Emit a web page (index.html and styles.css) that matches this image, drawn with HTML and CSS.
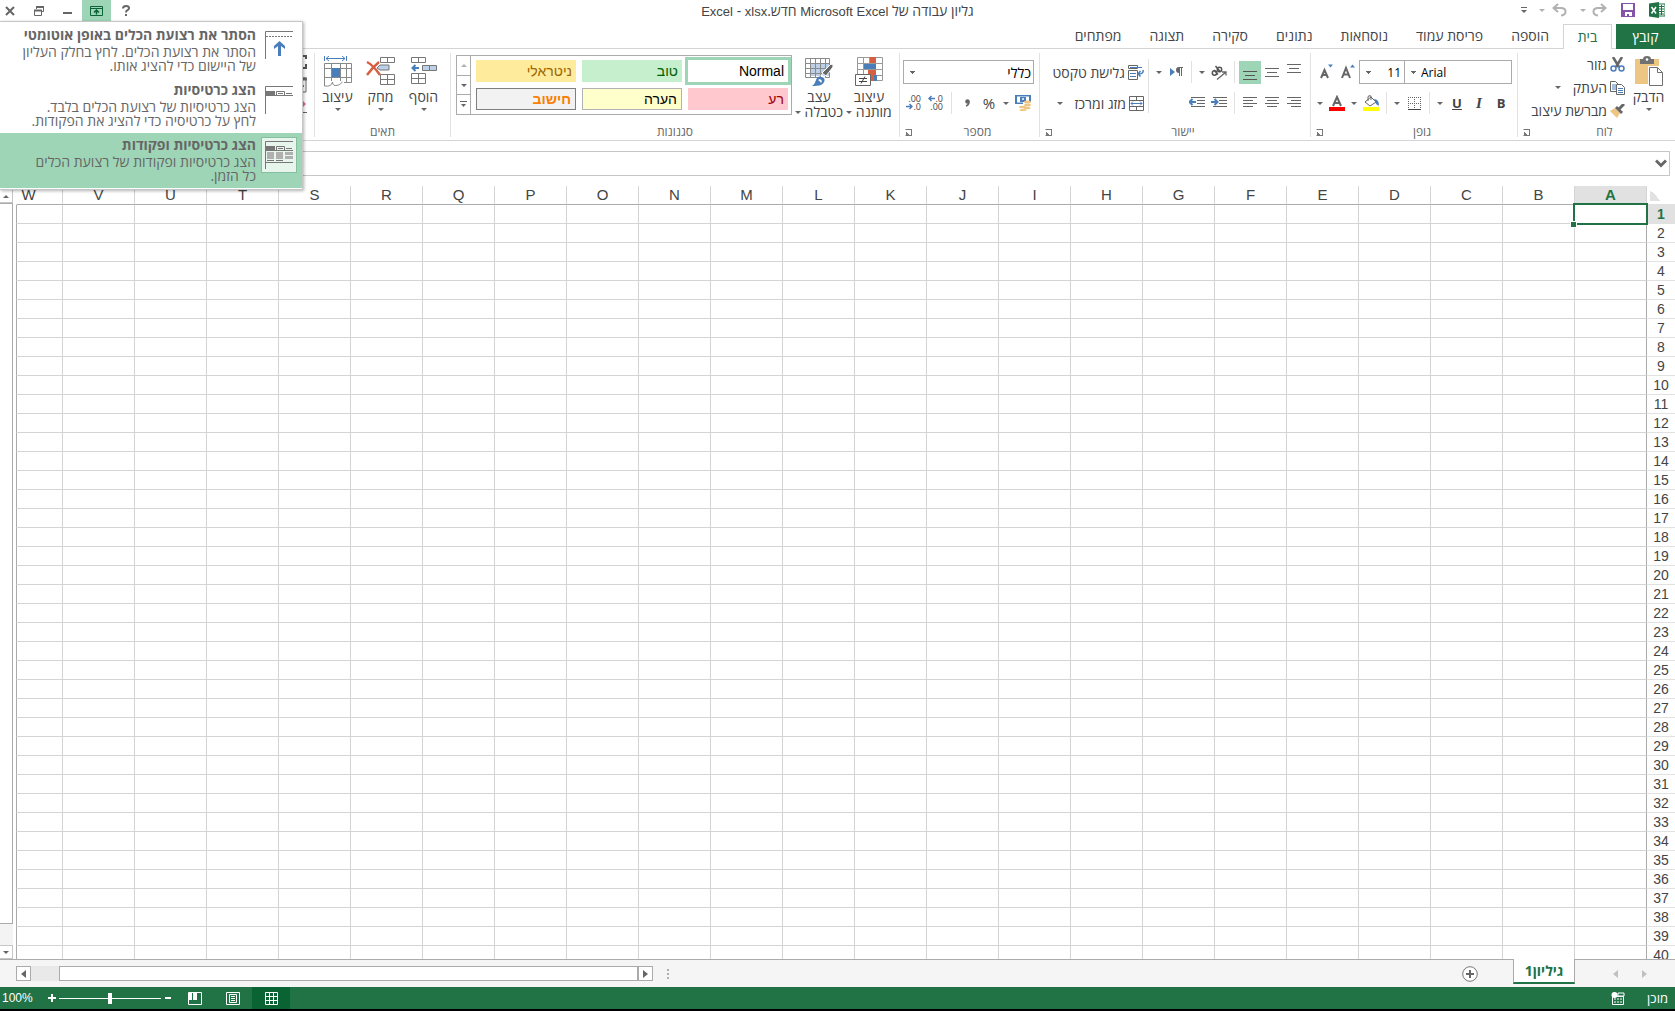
FILE: index.html
```
<!DOCTYPE html>
<html lang="he" dir="rtl">
<head>
    <meta charset="UTF-8">
    <meta name="viewport" content="width=device-width, initial-scale=1.0">
    <title>גליון עבודה של Microsoft Excel חדש.xlsx - Excel</title>
    <link rel="stylesheet" href="styles.css">
</head>
<body>
    <header class="titlebar">
        <div class="quick-access">
            <svg width="16" height="16" viewBox="0 0 16 16"><path d="M9 2h7v12H9z" fill="#fff" stroke="#217346"/><path d="M10 4.500h5M10 7h5M10 9.500h5M10 12h5M12.500 3v10" stroke="#217346"/><path d="M0 1.500L10 0v16L0 14.500z" fill="#217346"/><path d="M2.500 5l4.500 6.500M7 5l-4.500 6.500" stroke="#fff" stroke-width="1.500"/></svg>
            <button class="qa-save" aria-label="שמור"><svg width="14" height="14" viewBox="0 0 14 14"><path d="M0 0h14v14H0z" fill="#8553a8"/><path d="M2 1h10v6H2zM4 9h7v4H8v-2H6v2H4z" fill="#fff"/></svg></button>
            <button class="qa-redo" aria-label="בצע שוב"><svg width="15" height="14" viewBox="0 0 15 14"><path d="M13 5H6Q1.500 5 1.500 8.500T6 12.500M9 1l4.500 4L9 9" fill="none" stroke="#b1b1b1" stroke-width="2"/></svg></button>
            <span class="caret pale"></span>
            <button class="qa-undo" aria-label="בטל"><svg width="15" height="14" viewBox="0 0 15 14"><path d="M2 5h7q4.500 0 4.500 3.500T9 12.500M6 1L1.500 5 6 9" fill="none" stroke="#b1b1b1" stroke-width="2"/></svg></button>
            <span class="caret pale"></span>
            <button class="qa-more" aria-label="התאמה אישית"><svg width="6" height="7" viewBox="0 0 6 7"><path d="M0 .5h6" stroke="#666"/><path d="M0 3h6L3 6z" fill="#666"/></svg></button>
        </div>
        <h1 class="doc-title">גליון עבודה של <bdi>Microsoft Excel</bdi> חדש.<bdi>xlsx</bdi> - <bdi>Excel</bdi></h1>
        <div class="window-buttons">
            <button aria-label="עזרה"><svg width="8" height="11" viewBox="0 0 8 11"><path d="M1 3.500Q1 1 4 1t3 2.300Q7 4.500 5.500 5.200T4 7.500M4 9v2" fill="none" stroke="#666" stroke-width="2"/></svg></button>
            <button class="on" aria-label="אפשרויות תצוגה של רצועת הכלים"><svg width="13" height="10" viewBox="0 0 13 10"><path d="M.5.5h12v9H.5zM1 2.500h11" fill="none" stroke="#0a6332"/><path d="M6.500 8.500V4M4 6.500L6.500 4 9 6.500" fill="none" stroke="#0a6332" stroke-width="1.500"/></svg></button>
            <button aria-label="מזער"><svg width="10" height="10" viewBox="0 0 10 10"><path d="M0 7h9" stroke="#666" stroke-width="2"/></svg></button>
            <button aria-label="שחזר"><svg width="10" height="10" viewBox="0 0 10 10"><path d="M2.500 3V.5h7v5H7M.5 4.500h7v5h-7z" fill="none" stroke="#666"/><path d="M2 1h8M0 4.500h8" stroke="#666" stroke-width="2"/></svg></button>
            <button aria-label="סגור"><svg width="10" height="10" viewBox="0 0 10 10"><path d="M1 1l8 8M9 1L1 9" stroke="#666" stroke-width="2"/></svg></button>
        </div>
    </header>

    <nav class="tabs">
        <button class="tab file">קובץ</button>
        <button class="tab current">בית</button>
        <button class="tab">הוספה</button>
        <button class="tab">פריסת עמוד</button>
        <button class="tab">נוסחאות</button>
        <button class="tab">נתונים</button>
        <button class="tab">סקירה</button>
        <button class="tab">תצוגה</button>
        <button class="tab">מפתחים</button>
    </nav>

    <div class="ribbon">
        <section class="group clipboard">
            <div class="group-body">
                <button class="big">
                    <svg width="28" height="31" viewBox="0 0 28 31"><path d="M0 3h24v25H0z" fill="#edc683"/><path d="M5 3h3q0-3 4-3t4 3h3v5H5z" fill="#717171"/><circle cx="12" cy="3.500" r="1.300" fill="#fff"/><path d="M13 10h15v20H13z" fill="#fff"/><path d="M14.500 11.500h8l5 5v13h-13zM22.500 11.500v5h5" fill="#fff" stroke="#717171"/></svg>
                    <span>הדבק</span><i class="caret"></i>
                </button>
                <div class="small-list">
                    <button class="small"><svg width="15" height="15" viewBox="0 0 15 15"><path d="M3 0l6 10M12 0L6 10" stroke="#666" stroke-width="2.500"/><circle cx="3.500" cy="11.500" r="2.500" fill="none" stroke="#4a7ebb" stroke-width="1.500"/><circle cx="11.500" cy="11.500" r="2.500" fill="none" stroke="#4a7ebb" stroke-width="1.500"/></svg>גזור</button>
                    <button class="small copy"><svg width="15" height="14" viewBox="0 0 15 14"><path d="M.5.5h5l3 3v7h-8z" fill="#fff" stroke="#666"/><path d="M2 4h4M2 6h4M2 8h4" stroke="#4a7ebb"/><path d="M6.500 3.500h5l3 3v7h-8z" fill="#fff" stroke="#666"/><path d="M8 7.500h5M8 9.500h5M8 11.500h5" stroke="#4a7ebb"/></svg>העתק<i class="caret"></i></button>
                    <button class="small"><svg width="15" height="14" viewBox="0 0 15 14"><path d="M0 7l5-3 5 5-3 5z" fill="#edc683"/><path d="M5 4l2-2 6 6-2 2z" fill="#666"/><path d="M9 5l5-5" stroke="#666" stroke-width="3"/></svg>מברשת עיצוב</button>
                </div>
            </div>
            <footer><span>לוח</span><button class="launcher" aria-label="לוח"></button></footer>
        </section>

        <section class="group font">
            <div class="group-body rows">
                <div class="row">
                    <select class="font-name" aria-label="גופן"><option>Arial</option></select>
                    <select class="font-size" aria-label="גודל גופן"><option>11</option></select>
                    <button class="tool" aria-label="הגדל גופן"><svg width="14" height="16" viewBox="0 0 14 16"><path d="M1 14L5 4l4 10M2.500 10.500h5" fill="none" stroke="#666" stroke-width="2"/><path d="M9 3.500h5L11.500.5z" fill="#4a7ebb"/></svg></button>
                    <button class="tool" aria-label="הקטן גופן"><svg width="14" height="16" viewBox="0 0 14 16"><path d="M2 14l3.500-8L9 14M3.500 11h4" fill="none" stroke="#666" stroke-width="2"/><path d="M9 .5h5l-2.500 3z" fill="#4a7ebb"/></svg></button>
                </div>
                <div class="row">
                    <button class="tool letter">B</button>
                    <button class="tool letter italic">I</button>
                    <button class="tool letter underline">U</button>
                    <button class="drop" aria-label="קו תחתון"><i class="caret"></i></button>
                    <span class="sep"></span>
                    <button class="tool" aria-label="גבולות"><svg width="13" height="13" viewBox="0 0 13 13"><path d="M.5 0v12M6.500 0v12M12.500 0v12M0 .5h13M0 6.500h13" stroke="#666" stroke-dasharray="1 1"/><path d="M0 12.500h13" stroke="#444"/></svg></button>
                    <button class="drop" aria-label="סוגי גבולות"><i class="caret"></i></button>
                    <span class="sep"></span>
                    <button class="tool" aria-label="צבע מילוי"><svg width="16" height="16" viewBox="0 0 16 16"><path d="M2 7l6-5 5 5-6 4z" fill="#fff" stroke="#666"/><path d="M5 6V2q0-2 3-1v4" fill="none" stroke="#666"/><path d="M11 4q5 0 5 7l-3-2z" fill="#4a7ebb"/><path d="M0 12h16v4H0z" fill="#ff0"/></svg></button>
                    <button class="drop" aria-label="צבעי מילוי"><i class="caret"></i></button>
                    <button class="tool" aria-label="צבע גופן"><svg width="16" height="16" viewBox="0 0 16 16"><path d="M4 11L8 2l4 9M5.500 8h5" fill="none" stroke="#666" stroke-width="2"/><path d="M0 12h16v4H0z" fill="#f00"/></svg></button>
                    <button class="drop" aria-label="צבעי גופן"><i class="caret"></i></button>
                </div>
            </div>
            <footer><span>גופן</span><button class="launcher" aria-label="גופן"></button></footer>
        </section>

        <section class="group alignment">
            <div class="group-body">
                <div class="rows">
                    <div class="row">
                        <button class="tool" aria-label="יישור למעלה"><svg width="14" height="16" viewBox="0 0 14 16"><path d="M0 .5h14M2 4.500h10M0 8.500h14" stroke="#666"/></svg></button>
                        <button class="tool" aria-label="יישור לאמצע"><svg width="14" height="16" viewBox="0 0 14 16"><path d="M0 4.500h14M2 8.500h10M0 12.500h14" stroke="#666"/></svg></button>
                        <button class="tool on" aria-label="יישור למטה"><svg width="14" height="16" viewBox="0 0 14 16"><path d="M0 7.500h14M2 11.500h10M0 15.500h14" stroke="#555"/></svg></button>
                        <span class="sep"></span>
                        <button class="tool" aria-label="כיוון"><svg width="16" height="15" viewBox="0 0 16 15"><g fill="none" stroke="#555" stroke-width="1.500"><circle cx="3.500" cy="8" r="2.200"/><path d="M3 5l4 4.500"/><circle cx="8.500" cy="4.500" r="2.200"/><path d="M4.500 1l5 6"/></g><path d="M6 14.500L15 7M15 10.500V7h-4" fill="none" stroke="#666" stroke-width="1.300"/></svg></button>
                        <button class="drop" aria-label="כיוונים"><i class="caret"></i></button>
                        <span class="sep"></span>
                        <button class="tool" aria-label="כיוון טקסט"><svg width="13" height="10" viewBox="0 0 13 10"><path d="M0 1l5 4-5 4z" fill="#4a7ebb"/><path d="M9 0h4v1H9zM9 0v6Q6 6 6 3t3-3z" fill="#666"/><path d="M9.500 0v9M11.500 0v9" stroke="#666"/></svg></button>
                        <button class="drop" aria-label="כיווני טקסט"><i class="caret"></i></button>
                    </div>
                    <div class="row">
                        <button class="tool" aria-label="יישור לימין"><svg width="14" height="12" viewBox="0 0 14 12"><path d="M0 .5h14M4 3.500h10M0 6.500h14M4 9.500h10" stroke="#666"/></svg></button>
                        <button class="tool" aria-label="מרכז"><svg width="14" height="12" viewBox="0 0 14 12"><path d="M0 .5h14M2 3.500h10M0 6.500h14M2 9.500h10" stroke="#666"/></svg></button>
                        <button class="tool" aria-label="יישור לשמאל"><svg width="14" height="12" viewBox="0 0 14 12"><path d="M0 .5h14M0 3.500h10M0 6.500h14M0 9.500h10" stroke="#666"/></svg></button>
                        <span class="sep"></span>
                        <button class="tool" aria-label="הקטן כניסה"><svg width="16" height="12" viewBox="0 0 16 12"><path d="M2 .5h14M8 3.500h8M8 6.500h8M2 9.500h14" stroke="#666"/><path d="M0 5h6M3.500 2l3 3-3 3" fill="none" stroke="#4a7ebb" stroke-width="2"/></svg></button>
                        <button class="tool" aria-label="הגדל כניסה"><svg width="16" height="12" viewBox="0 0 16 12"><path d="M2 .5h14M8 3.500h8M8 6.500h8M2 9.500h14" stroke="#666"/><path d="M7 5H1M3.500 2l-3 3 3 3" fill="none" stroke="#4a7ebb" stroke-width="2"/></svg></button>
                    </div>
                </div>
                <span class="sep tall"></span>
                <div class="rows">
                    <button class="small"><svg width="16" height="15" viewBox="0 0 16 15"><path d="M.5.5h9v3h-9zM.5 5.500h9v9h-9z" fill="none" stroke="#666"/><path d="M2 2.500h12M2 8.500h6M2 11.500h6" stroke="#4a7ebb"/><path d="M15 5q1 4-5 4M12.500 6L10 9l2.500 2.500" fill="none" stroke="#4a7ebb" stroke-width="1.500"/></svg>גלישת טקסט</button>
                    <button class="small merge"><svg width="15" height="15" viewBox="0 0 15 15"><path d="M.5.5h14v14H.5zM0 4.500h15M0 10.500h15M7.500 0v4M7.500 11v4" fill="none" stroke="#666"/><path d="M2 7.500h11M4 5.500l-2 2 2 2M11 5.500l2 2-2 2" fill="none" stroke="#4a7ebb"/></svg>מזג ומרכז<i class="caret"></i></button>
                </div>
            </div>
            <footer><span>יישור</span><button class="launcher" aria-label="יישור"></button></footer>
        </section>

        <section class="group number">
            <div class="group-body rows">
                <div class="row">
                    <select class="number-format" aria-label="תבנית מספר"><option>כללי</option></select>
                </div>
                <div class="row">
                    <button class="tool" aria-label="מטבע"><svg width="16" height="16" viewBox="0 0 16 16"><path d="M0 0h16v9H0z" fill="#4a7ebb"/><path d="M2 1.500h12v6H2z" fill="#fff"/><path d="M5 2h6v5H5z" fill="#4a7ebb"/><circle cx="8" cy="4" r="1" fill="#fff"/><path d="M8 7h8v6H8z" fill="#fff"/><g fill="#edc683"><ellipse cx="12.500" cy="7" rx="3.500" ry="1.500"/><ellipse cx="12.500" cy="10" rx="3.500" ry="1.300"/><ellipse cx="12" cy="13" rx="3.500" ry="1.300"/><ellipse cx="7.500" cy="12" rx="3.500" ry="1.300"/><ellipse cx="8" cy="15" rx="3.500" ry="1"/></g></svg></button>
                    <button class="drop" aria-label="מטבעות"><i class="caret"></i></button>
                    <button class="tool percent">%</button>
                    <button class="tool" aria-label="סגנון פסיק"><svg width="5" height="8" viewBox="0 0 5 8"><circle cx="2.500" cy="2.500" r="2.300" fill="#666"/><path d="M4 3q0 3-3 4" fill="none" stroke="#666" stroke-width="1.500"/></svg></button>
                    <span class="sep"></span>
                    <button class="tool decimal" aria-label="הוסף מקום עשרוני"><span><svg width="7" height="7" viewBox="0 0 7 7"><path d="M7 3.500H1M3.500 1L1 3.500 3.500 6" fill="none" stroke="#4a7ebb" stroke-width="1.500"/></svg>.0</span><span>.00</span></button>
                    <button class="tool decimal" aria-label="הסר מקום עשרוני"><span>.00</span><span><svg width="7" height="7" viewBox="0 0 7 7"><path d="M0 3.500h6M3.500 1L6 3.500 3.500 6" fill="none" stroke="#4a7ebb" stroke-width="1.500"/></svg>.0</span></button>
                </div>
            </div>
            <footer><span>מספר</span><button class="launcher" aria-label="מספר"></button></footer>
        </section>

        <section class="group styles">
            <div class="group-body">
                <button class="big wide">
                    <svg width="30" height="31" viewBox="0 0 30 31"><path d="M3.500 1.500h25v23h-25zM3 7.500h26M3 13.500h26M3 19.500h26M9.500 1v24M15.500 1v24M21.500 1v24" fill="#fff" stroke="#9a9a9a"/><path d="M16 1h6v6h-6zM14 14h8v5h-8zM16 19h6v6h-6z" fill="#d65f42"/><path d="M10 8h12v5H10zM20 19h3v6h-3z" fill="#4a7ebb"/><path d="M1.500 18.500h15v11h-15z" fill="#fff" stroke="#666"/><path d="M5 22.500h8M5 25.500h8M11 20.500l-4 7" stroke="#444"/></svg>
                    <span>עיצוב<br>מותנה <i class="caret"></i></span>
                </button>
                <button class="big wide">
                    <svg width="30" height="31" viewBox="0 0 30 31"><path d="M7 8h18v12H7z" fill="#bcd0e8"/><path d="M1.500 2.500h24v19h-24zM1 7.500h25M1 12.500h25M1 17.500h25M6.500 2v20M11.500 2v20M16.500 2v20M21.500 2v20" fill="none" stroke="#8a8a8a"/><path d="M27 8q3 1 2 3l-7 9-4-3z" fill="#666" stroke="#fff"/><path d="M17 19l4 4" stroke="#fff" stroke-width="2"/><path d="M7 30q3 0 5-6t8-2q2 4-3 7-3 1-10 1z" fill="#4a7ebb"/><path d="M14 24l2-1 2 2-1 2q-1-2-3-3z" fill="#fff"/></svg>
                    <span>עצב<br>כטבלה <i class="caret"></i></span>
                </button>
                <div class="gallery">
                    <div class="swatches">
                        <button class="swatch normal">Normal</button>
                        <button class="swatch good">טוב</button>
                        <button class="swatch neutral">ניטראלי</button>
                        <button class="swatch bad">רע</button>
                        <button class="swatch note">הערה</button>
                        <button class="swatch calc">חישוב</button>
                    </div>
                    <div class="gallery-nav">
                        <button aria-label="למעלה"><i class="caret up pale"></i></button>
                        <button aria-label="למטה"><i class="caret"></i></button>
                        <button aria-label="עוד"><svg width="7" height="7" viewBox="0 0 7 7"><path d="M0 .5h7" stroke="#666"/><path d="M1 3h5L3.500 6z" fill="#666"/></svg></button>
                    </div>
                </div>
            </div>
            <footer><span>סגנונות</span></footer>
        </section>

        <section class="group cells">
            <div class="group-body">
                <button class="big">
                    <svg width="28" height="31" viewBox="0 0 28 31"><path d="M1.500 1.500h14v5h-14zM8.500 1v5M1.500 17.500h14v10h-14zM1 22.500h15M8.500 17v11" fill="#fff" stroke="#777"/><path d="M12.500 9.500h14v5h-14z" fill="#bcd0e8" stroke="#777"/><path d="M19.500 9v6" stroke="#777"/><path d="M9 12H3M5.500 9L2.500 12l3 3" fill="none" stroke="#4a7ebb" stroke-width="2"/></svg>
                    <span>הוסף</span><i class="caret"></i>
                </button>
                <button class="big">
                    <svg width="30" height="31" viewBox="0 0 30 31"><path d="M14.500 1.500h14v5h-14zM21.500 1v5M14.500 18.500h14v10h-14zM14 23.500h15M21.500 18v11" fill="#fff" stroke="#777"/><path d="M11 12l3-3h9v5h-9z" fill="#bcd0e8" stroke="#777"/><path d="M1 6q6 3 13 13M13 6Q7 11 1 19" fill="none" stroke="#d65f42" stroke-width="2.500"/></svg>
                    <span>מחק</span><i class="caret"></i>
                </button>
                <button class="big">
                    <svg width="28" height="31" viewBox="0 0 28 31"><path d="M.5 7.500h27v19H.5zM0 12.500h28M0 21.500h28M7.500 7v20M16.500 7v20M22.500 7v20" fill="#fff" stroke="#888"/><path d="M8 12h8v9H8z" fill="#4a7ebb"/><path d="M.5 0v5M22.500 0v5M2 2.500h19M5 0L2 2.500 5 5M18 0l3 2.500L18 5" fill="none" stroke="#4a7ebb"/><path d="M0 25h20v6H0z" fill="#fff"/><path d="M.500 25v5q7 1 8-4 0 5 6 3 2-1 4-3" fill="none" stroke="#888"/></svg>
                    <span>עיצוב</span><i class="caret"></i>
                </button>
            </div>
            <footer><span>תאים</span></footer>
        </section>

        <section class="group editing">
            <div class="group-body">
                <svg width="12" height="62" viewBox="0 0 12 62"><path d="M0 3h11v3M0 15h11v-4" fill="none" stroke="#555" stroke-width="2"/><path d="M0 25h11v14H0z" fill="#fff" stroke="#666"/><path d="M0 26h12" stroke="#666" stroke-width="3"/><path d="M7 33h2" stroke="#4a7ebb" stroke-width="2"/><path d="M6 46l5 5-5 5z" fill="#e06a8a"/><path d="M0 59.500h12" stroke="#666"/></svg>
            </div>
        </section>
    </div>

    <div class="formula-bar">
        <input type="text" aria-label="שורת הנוסחאות">
        <button aria-label="הרחב את שורת הנוסחאות"><svg width="12" height="9" viewBox="0 0 12 9"><path d="M1 1.500l5 5 5-5" fill="none" stroke="#666" stroke-width="3"/></svg></button>
    </div>

    <main class="sheet">
        <div class="grid-wrap">
            <table class="grid">
                <thead><tr id="columns"><th class="corner"></th></tr></thead>
                <tbody id="rows"></tbody>
            </table>
        </div>
        <div class="v-scroll">
            <button aria-label="גלול למעלה"><i class="caret up"></i></button>
            <div class="thumb"></div>
            <button aria-label="גלול למטה"><i class="caret"></i></button>
        </div>
    </main>

    <div class="sheet-bar">
        <div class="sheet-nav">
            <button aria-label="הגיליון הקודם"><svg width="5" height="8" viewBox="0 0 5 8"><path d="M0 0l5 4-5 4z" fill="#c0c0c0"/></svg></button>
            <button aria-label="הגיליון הבא"><svg width="5" height="8" viewBox="0 0 5 8"><path d="M5 0L0 4l5 4z" fill="#c0c0c0"/></svg></button>
        </div>
        <button class="sheet-tab">גיליון1</button>
        <button class="sheet-add" aria-label="גיליון חדש"><svg width="16" height="16" viewBox="0 0 16 16"><circle cx="8" cy="8" r="7.300" fill="#fff" stroke="#777"/><path d="M4 8h8M8 4v8" stroke="#666" stroke-width="2"/></svg></button>
        <svg class="grip" width="2" height="12" viewBox="0 0 2 12"><path d="M1 1v10" stroke="#b0b0b0" stroke-width="2" stroke-dasharray="2 2"/></svg>
        <div class="h-scroll">
            <button aria-label="גלול ימינה"><svg width="5" height="8" viewBox="0 0 5 8"><path d="M0 0l5 4-5 4z" fill="#666"/></svg></button>
            <div class="thumb"></div>
            <button aria-label="גלול שמאלה"><svg width="5" height="8" viewBox="0 0 5 8"><path d="M5 0L0 4l5 4z" fill="#666"/></svg></button>
        </div>
    </div>

    <footer class="status">
        <span>מוכן</span>
        <button class="macro" aria-label="הקלט מאקרו"><svg width="14" height="13" viewBox="0 0 14 13"><path d="M7 1h6v3H7zM1.500 4.500h11v8h-11z" fill="none" stroke="#fff"/><path d="M3 7h9M3 10h9" stroke="#fff" stroke-dasharray="2 1"/><circle cx="3.500" cy="3" r="3" fill="#fff"/></svg></button>
        <div class="views">
            <button class="view on" aria-label="רגיל"><svg width="13" height="13" viewBox="0 0 13 13"><path d="M.5.500h12v12H.5zM0 4.500h13M0 8.500h13M4.500 0v13M8.500 0v13" fill="none" stroke="#fff"/></svg></button>
            <button class="view" aria-label="פריסת עמוד"><svg width="14" height="13" viewBox="0 0 14 13"><path d="M.5.500h13v12H.5zM3.500 2.500h7v8h-7zM5 4.500h4M5 6.500h4M5 8.500h4" fill="none" stroke="#fff"/></svg></button>
            <button class="view" aria-label="מעברי עמוד"><svg width="14" height="13" viewBox="0 0 14 13"><path d="M.5.500h13v12H.5z" fill="none" stroke="#fff"/><path d="M1 1h3v7H1zM5 1h4v7H5z" fill="#fff"/></svg></button>
        </div>
        <div class="zoom">
            <button aria-label="הקטן"><svg width="8" height="8" viewBox="0 0 8 8"><path d="M1 4h6" stroke="#fff" stroke-width="2"/></svg></button>
            <input type="range" min="0" max="100" value="50" aria-label="זום">
            <button aria-label="הגדל"><svg width="8" height="8" viewBox="0 0 8 8"><path d="M0 4h8M4 0v8" stroke="#fff" stroke-width="2"/></svg></button>
            <span class="zoom-value">100%</span>
        </div>
    </footer>

    <div class="ribbon-menu">
        <button class="option">
            <span class="option-icon"><svg width="28" height="28" viewBox="0 0 28 28"><path d="M.5 28V.5H28" fill="none" stroke="#777"/><path d="M1 5.500h27" stroke="#777" stroke-dasharray="2 1"/><path d="M14.500 25V13" stroke="#4a7ebb" stroke-width="3"/><path d="M9 18v-3l5.500-5 5.500 5v3l-5.500-4z" fill="#4a7ebb"/></svg></span>
            <span class="option-text"><strong>הסתר את רצועת הכלים באופן אוטומטי</strong>הסתר את רצועת הכלים. לחץ בחלק העליון<br>של היישום כדי להציג אותו.</span>
        </button>
        <button class="option">
            <span class="option-icon"><svg width="28" height="28" viewBox="0 0 28 28"><path d="M.5 28V.5H28M0 9.500h28M11.500 9V5.500h8V9M13 7.500h5M21 7.500h6" fill="none" stroke="#777"/><path d="M0 5h10v4H0z" fill="#777"/></svg></span>
            <span class="option-text"><strong>הצג כרטיסיות</strong>הצג כרטיסיות של רצועת הכלים בלבד.<br>לחץ על כרטיסיה כדי להציג את הפקודות.</span>
        </button>
        <button class="option selected">
            <span class="option-icon"><svg width="28" height="28" viewBox="0 0 28 28"><path d="M.5 28V.5H28M0 9.500h28M11.500 9V5.500h8V9M13 7.500h5M21 7.500h6M0 21.500h28M2 19.500h7M11 19.500h7" fill="none" stroke="#777"/><path d="M0 5h10v4H0z" fill="#777"/><path d="M2 11h7v7H2zM11 11h7v7h-7zM20 11h8v3h-8zM20 15h8v3h-8z" fill="#b0b0b0"/></svg></span>
            <span class="option-text"><strong>הצג כרטיסיות ופקודות</strong>הצג כרטיסיות ופקודות של רצועת הכלים<br>כל הזמן.</span>
        </button>
    </div>

    <script>
        const columns = 'ABCDEFGHIJKLMNOPQRSTUVW'.split('');
        const rowCount = 40;

        columns.forEach((letter, i) => {
            document.getElementById('columns').innerHTML +=
                `<th class="${i === 0 ? 'picked' : ''}"><span>${letter}</span></th>`;
        });

        let rowsHTML = '';
        for (let r = 1; r <= rowCount; r++) {
            rowsHTML += `<tr><th class="${r === 1 ? 'picked' : ''}">${r}</th>`;
            columns.forEach((letter, i) => {
                rowsHTML += r === 1 && i === 0 ? '<td class="active-cell"></td>' : '<td></td>';
            });
            rowsHTML += '</tr>';
        }
        document.getElementById('rows').innerHTML = rowsHTML;
    </script>
</body>
</html>
```
FILE: styles.css
```
* {
    box-sizing: border-box;
}
body {
    margin: 0;
    height: 100vh;
    display: flex;
    flex-direction: column;
    overflow: hidden;
    background: #fff;
    color: #444;
    font-family: "Open Sans", "Liberation Sans", sans-serif;
    font-size: 14px;
    border-bottom: 2px solid #000;
}
button, input, select {
    font: inherit;
    color: inherit;
    background: none;
    border: 0;
    padding: 0;
    margin: 0;
}
svg {
    display: block;
    flex: none;
}
.caret {
    display: inline-block;
    flex: none;
    width: 0;
    border: 3px solid transparent;
    border-top-color: #666;
    border-bottom: 0;
}
.caret.up {
    border-top: 0;
    border-bottom: 3px solid #666;
}
.caret.pale {
    border-top-color: #b1b1b1;
}
.caret.up.pale {
    border-bottom-color: #b1b1b1;
}

/* title bar */
.titlebar {
    display: grid;
    grid-template-columns: 1fr auto 1fr;
    height: 24px;
}
.quick-access {
    display: flex;
    align-items: center;
    height: 20px;
    padding-right: 10px;
}
.qa-save {
    margin-right: 14px;
}
.qa-redo {
    margin: 0 14px 0 6px;
}
.qa-undo {
    margin: 0 13px 0 7px;
}
.qa-more {
    margin-right: 12px;
}
.doc-title {
    margin: 0;
    font-size: 14px;
    font-weight: normal;
    line-height: 22px;
}
.doc-title bdi {
    font-family: "Liberation Sans", sans-serif;
    font-size: 13px;
}
.window-buttons {
    display: flex;
    justify-content: flex-end;
}
.window-buttons button {
    width: 29px;
    height: 21px;
    display: flex;
    align-items: center;
    justify-content: center;
}
.window-buttons button:last-child {
    width: 24px;
    padding-right: 4px;
}
.window-buttons .on {
    background: #9fd5b7;
}

/* tabs */
.tabs {
    display: flex;
    height: 25px;
    border-bottom: 1px solid #d4d4d4;
}
.tab {
    padding: 0 14px;
    height: 24px;
    line-height: 22px;
}
.tab.file {
    width: 59px;
    height: 25px;
    background: #217346;
    color: #fff;
    margin-left: 4px;
}
.tab.current {
    width: 49px;
    height: 25px;
    padding: 0;
    background: #fff;
    border: 1px solid #d4d4d4;
    border-bottom: 0;
    color: #217346;
}

/* ribbon */
.ribbon {
    display: flex;
    height: 92px;
    padding-top: 4px;
    border-bottom: 1px solid #d4d4d4;
}
.group {
    display: flex;
    flex-direction: column;
    height: 84px;
    flex: none;
    border-left: 1px solid #e1e1e1;
}
.clipboard {
    width: 158px;
}
.font {
    width: 207px;
}
.alignment {
    width: 271px;
}
.number {
    width: 140px;
}
.styles {
    width: 449px;
}
.cells {
    width: 136px;
}
.editing {
    border: 0;
    padding-right: 7px;
}
.editing .group-body {
    padding: 0;
}
.group-body {
    display: flex;
    height: 72px;
    padding-right: 5px;
}
.group footer {
    display: flex;
    height: 12px;
    line-height: 14px;
    font-size: 12px;
    color: #666;
    text-align: center;
}
.group footer span {
    flex: 1;
}
.launcher {
    width: 7px;
    height: 7px;
    margin: 4px 4px 0 5px;
    border: 1px solid #777;
    border-left-color: transparent;
    background: linear-gradient(45deg, #777 40%, transparent 40%);
}
.rows {
    display: flex;
    flex-direction: column;
    gap: 7px;
    padding-top: 7px;
}
.row {
    display: flex;
    align-items: center;
    height: 24px;
}
.big {
    width: 43px;
    padding-top: 3px;
    display: flex;
    flex-direction: column;
    align-items: center;
    justify-content: flex-start;
    line-height: 15px;
}
.big span {
    margin: 2px 0 4px;
}
.big.wide {
    width: 50px;
    white-space: nowrap;
}
.big.wide .caret {
    vertical-align: 3px;
}
.small-list {
    display: flex;
    flex-direction: column;
    padding-right: 2px;
}
.small {
    display: flex;
    align-items: center;
    gap: 3px;
    height: 23px;
    white-space: nowrap;
}
.small .caret {
    margin-right: 9px;
}
.rows .small {
    height: 24px;
}
.tool {
    width: 22px;
    height: 23px;
    display: flex;
    align-items: center;
    justify-content: center;
}
.tool.on {
    background: #9fd5b7;
}
.drop {
    width: 12px;
    height: 22px;
    display: flex;
    align-items: center;
    justify-content: center;
}
.sep {
    width: 1px;
    height: 22px;
    margin: 0 4px;
    background: #e1e1e1;
}
.sep.tall {
    height: 54px;
    margin-top: 6px;
}
.letter {
    font-size: 13px;
    font-weight: bold;
}
.italic {
    font-family: "Liberation Serif", serif;
    font-style: italic;
    font-size: 15px;
}
.underline {
    text-decoration: underline;
}
.percent {
    font-size: 15px;
}
.decimal {
    flex-direction: column;
    direction: ltr;
    font-size: 9px;
    line-height: 8px;
    align-items: flex-end;
    padding-right: 4px;
}
.decimal span {
    display: flex;
}
select {
    appearance: none;
    height: 24px;
    border: 1px solid #ababab;
    background: linear-gradient(#666, #666) no-repeat 6px 10px / 5px 1px, linear-gradient(#666, #666) no-repeat 7px 11px / 3px 1px, linear-gradient(#666, #666) no-repeat 8px 12px / 1px 1px;
    color: #000;
}
.font-name {
    width: 108px;
    direction: ltr;
    padding-left: 16px;
    font-size: 12px;
}
.font-size {
    width: 46px;
    padding-right: 3px;
    margin-right: -1px;
    font-size: 12px;
}
.number-format {
    width: 131px;
    padding-right: 2px;
}

/* cell styles gallery */
.gallery {
    display: flex;
    width: 336px;
    height: 60px;
    margin: 2px 2px 0 0;
    border: 1px solid #ababab;
}
.swatches {
    flex: 1;
    display: grid;
    grid-template-columns: repeat(3, 100px);
    grid-auto-rows: 22px;
    gap: 6px;
    padding: 4px 3px 0 0;
}
.swatch {
    padding: 0 4px;
    text-align: right;
    line-height: 20px;
    font-family: "Liberation Sans", sans-serif;
    font-size: 14px;
}
.swatch.normal {
    color: #000;
    outline: 3px solid #9fd5b7;
}
.swatch.good {
    background: #c6efce;
    color: #006100;
}
.swatch.neutral {
    background: #ffeb9c;
    color: #9c6500;
}
.swatch.bad {
    background: #ffc7ce;
    color: #9c0006;
}
.swatch.note {
    background: #ffffcc;
    border: 1px solid #b2b2b2;
    color: #000;
}
.swatch.calc {
    background: #f2f2f2;
    border: 1px solid #7f7f7f;
    color: #fa7d00;
    font-weight: bold;
}
.gallery-nav {
    display: flex;
    flex-direction: column;
    width: 14px;
    border-right: 1px solid #ababab;
}
.gallery-nav button {
    flex: 1;
    display: flex;
    align-items: center;
    justify-content: center;
}
.gallery-nav button + button {
    border-top: 1px solid #ababab;
}

/* formula bar */
.formula-bar {
    display: flex;
    align-items: center;
    height: 25px;
    margin: 10px 5px 10px 0;
    border: 1px solid #c6c6c6;
}
.formula-bar input {
    order: 1;
    flex: 1;
    height: 23px;
}
.formula-bar button {
    width: 17px;
    display: flex;
    justify-content: center;
}

/* worksheet */
.sheet {
    flex: 1;
    min-height: 0;
    display: flex;
}
.grid-wrap {
    flex: 1;
    min-width: 0;
    overflow: hidden;
}
.grid {
    width: 100%;
    table-layout: fixed;
    border-collapse: separate;
    border-spacing: 0;
    font-family: "Liberation Sans", sans-serif;
    font-size: 14px;
}
.grid th {
    width: 72px;
    height: 19px;
    padding: 0;
    line-height: 18px;
    font-weight: normal;
}
.grid th:first-child {
    width: 29px;
    border-left: 1px solid #ababab;
    border-bottom: 1px solid #e1e1e1;
}
.grid th:last-child {
    width: auto;
}
.grid thead th {
    border-bottom: 1px solid #ababab;
    border-left: 1px solid #d4d4d4;
    font-size: 15px;
}
.grid thead th:last-child {
    border-left-color: transparent;
    padding-right: 22px;
}
.grid thead .corner {
    border-left-color: #d4d4d4;
    background: linear-gradient(45deg, #e1e1e1 50%, transparent 50%) no-repeat 3px 4px / 11px 11px;
}
.grid th.picked {
    background: #e1e1e1;
    color: #217346;
    font-weight: bold;
}
.grid thead .picked {
    border-bottom-color: #217346;
}
.grid td {
    height: 19px;
    padding: 0;
    border-left: 1px solid #d4d4d4;
    border-bottom: 1px solid #d4d4d4;
}
.grid td:last-child {
    border-left-color: #ababab;
}
.active-cell {
    position: relative;
}
.active-cell::before {
    content: "";
    position: absolute;
    inset: -2px;
    border: 2px solid #217346;
}
.active-cell::after {
    content: "";
    position: absolute;
    left: -4px;
    bottom: -4px;
    width: 5px;
    height: 5px;
    background: #217346;
    outline: 1px solid #fff;
}
.v-scroll {
    width: 13px;
    margin: 3px 3px 0 0;
    display: flex;
    flex-direction: column;
    background: #f3f3f3;
}
.v-scroll button {
    height: 14px;
    display: flex;
    align-items: center;
    justify-content: center;
    background: #fff;
    border: 1px solid #c6c6c6;
    border-left: 0;
}
.v-scroll .thumb {
    flex: 1;
    margin-bottom: 21px;
    background: #fff;
    border: 1px solid #ababab;
    border-left: 0;
}

/* sheet tabs */
.sheet-bar {
    display: flex;
    align-items: center;
    height: 28px;
    background: #f5f5f5;
    border-top: 1px solid #ababab;
}
.sheet-nav {
    display: flex;
    gap: 24px;
    padding-right: 28px;
    width: 100px;
}
.sheet-tab {
    align-self: flex-start;
    width: 62px;
    height: 25px;
    margin-top: -1px;
    background: #fff;
    border: 1px solid #ababab;
    border-top: 0;
    border-bottom: 2px solid #217346;
    color: #217346;
    font-weight: bold;
}
.sheet-add {
    margin-right: 35px;
}
.grip {
    margin-right: auto;
}
.h-scroll {
    display: flex;
    width: 38%;
    height: 15px;
    margin: 0 14px 0 16px;
    background: #e9e9e9;
}
.h-scroll button {
    width: 15px;
    display: flex;
    align-items: center;
    justify-content: center;
    background: #fff;
    border: 1px solid #ababab;
}
.h-scroll .thumb {
    flex: 1;
    margin-left: 28px;
    background: #fff;
    border: 1px solid #ababab;
}

/* status bar */
.status {
    display: flex;
    align-items: center;
    height: 22px;
    padding: 0 7px 0 2px;
    background: #217346;
    color: #fff;
    font-size: 13px;
}
.macro {
    margin-right: 22px;
}
.views {
    display: flex;
    margin: 0 auto 0 4px;
}
.view {
    width: 38px;
    height: 22px;
    display: flex;
    align-items: center;
    justify-content: center;
}
.view.on {
    background: #0a6332;
}
.zoom {
    display: flex;
    align-items: center;
}
.zoom input {
    appearance: none;
    width: 102px;
    height: 11px;
    margin: 0 3px;
    background: linear-gradient(#fff, #fff) no-repeat center / 100% 1px;
}
.zoom input::-webkit-slider-thumb {
    appearance: none;
    width: 4px;
    height: 11px;
    background: #fff;
}
.zoom-value {
    width: 46px;
    direction: ltr;
    font-family: "Liberation Sans", sans-serif;
    font-size: 12px;
}

/* ribbon display options, opened over the sheet */
.ribbon-menu {
    position: absolute;
    top: 21px;
    left: 0;
    width: 303px;
    padding: 1px 0;
    background: #fff;
    border: 1px solid #c6c6c6;
    border-left: 0;
    box-shadow: 1px 1px 3px rgba(0, 0, 0, 0.3);
    color: #666;
}
.option {
    display: flex;
    width: 100%;
    height: 55px;
    padding: 4px 5px 0 0;
    text-align: right;
}
.option-icon {
    width: 36px;
    height: 36px;
    padding: 3px;
    border: 1px solid transparent;
    margin-left: 5px;
}
.option-text {
    flex: 1;
    line-height: 14px;
    white-space: nowrap;
}
.option-text strong {
    display: block;
    margin-bottom: 2px;
    line-height: 16px;
}
.option.selected {
    background: #9fd5b7;
}
.selected .option-icon {
    background: #e8f5ed;
    border-color: #86bfa0;
}
```
